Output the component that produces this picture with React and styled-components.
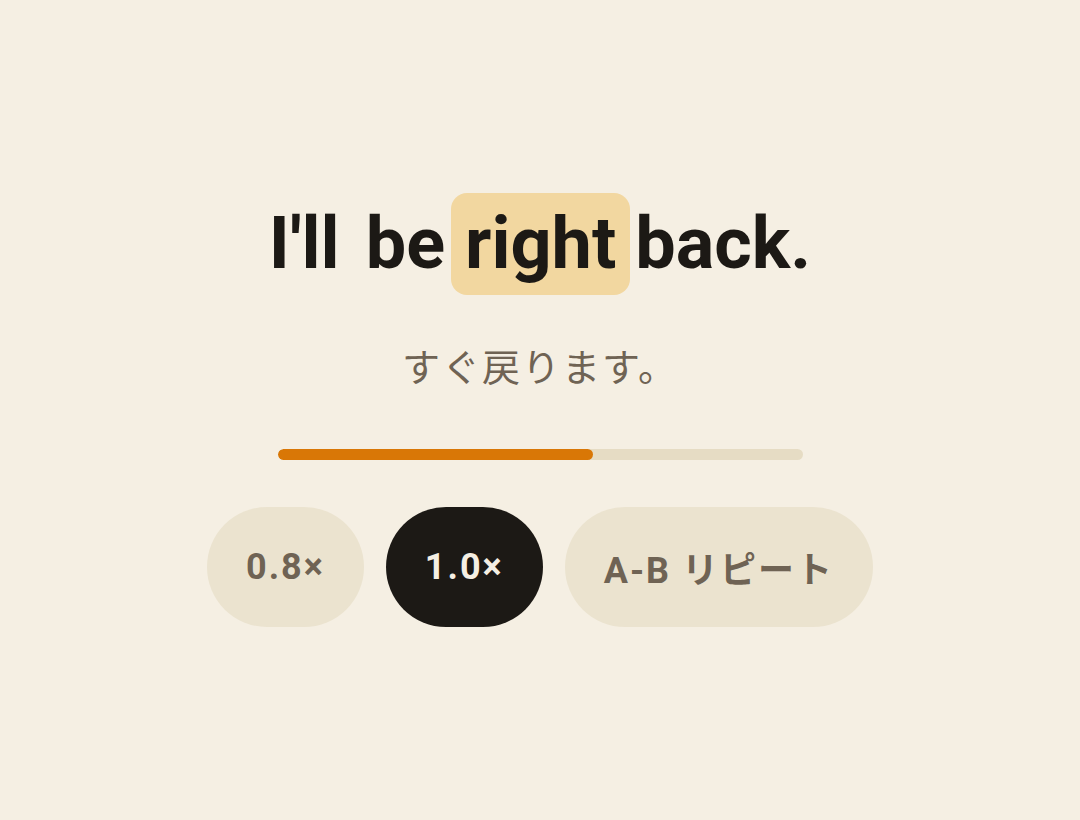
import React from "react";
import styled, { createGlobalStyle } from "styled-components";

const GlobalStyle = createGlobalStyle`
    html, body {
        margin: 0;
        padding: 0;
        background: #f5efe3;
    }
    body {
        font-family: Roboto, "Noto Sans CJK JP", sans-serif;
    }
`;

const Page = styled.main`
    min-height: 820px;
    display: flex;
    flex-direction: column;
    align-items: center;
    justify-content: center;
`;

const Sentence = styled.h1`
    margin: 0;
    display: flex;
    gap: 26px;
    font-family: Roboto, "Noto Sans CJK JP", sans-serif;
    font-size: 72px;
    font-weight: 700;
    line-height: 102px;
    color: #1c1915;
    white-space: nowrap;
`;

const Word = styled.span`
    display: block;
    ${(p) =>
        p.$current &&
        `
        padding: 0 14px;
        margin: 0 -21px 0 -20px;
        border-radius: 16px;
        background: #f2d7a0;
    `}
`;

const Translation = styled.p`
    margin: 40px 0 0;
    font-family: "Noto Sans CJK JP", sans-serif;
    font-size: 38px;
    font-weight: 400;
    letter-spacing: 2px;
    line-height: 60px;
    color: #6f6354;
`;

const Track = styled.div`
    margin-top: 54px;
    width: 525px;
    height: 11px;
    border-radius: 6px;
    background: #e6dcc4;
    overflow: hidden;
`;

const Fill = styled.div`
    height: 100%;
    border-radius: 6px;
    background: #d97706;
`;

const Controls = styled.div`
    margin-top: 47px;
    display: flex;
    gap: 22px;
`;

const Chip = styled.button`
    height: 120px;
    padding: 0 39px;
    border: none;
    border-radius: 60px;
    font-family: Roboto, "Noto Sans CJK JP", sans-serif;
    font-size: 36px;
    font-weight: 700;
    letter-spacing: 2px;
    background: ${(p) => (p.$active ? "#1c1915" : "#ebe3cf")};
    color: ${(p) => (p.$active ? "#f5efe3" : "#6f6354")};
    cursor: pointer;
`;

const words = ["I'll", "be", "right", "back."];

export default function App() {
    const current = 2;
    const progress = 60;
    return (
        <>
            <GlobalStyle />
            <Page>
                <Sentence>
                    {words.map((w, i) => (
                        <Word key={i} $current={i === current}>
                            {w}
                        </Word>
                    ))}
                </Sentence>
                <Translation>すぐ戻ります。</Translation>
                <Track>
                    <Fill style={{ width: `${progress}%` }} />
                </Track>
                <Controls>
                    <Chip>0.8×</Chip>
                    <Chip $active>1.0×</Chip>
                    <Chip>A-B リピート</Chip>
                </Controls>
            </Page>
        </>
    );
}
